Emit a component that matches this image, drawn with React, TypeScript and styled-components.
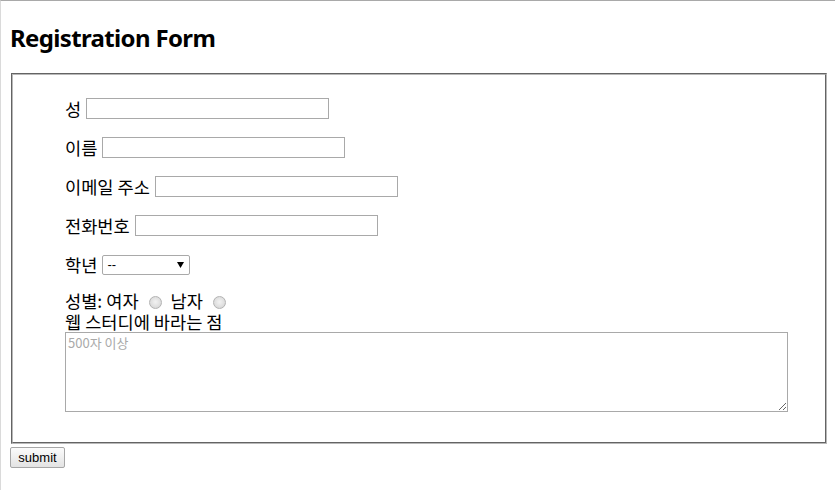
import React from "react";
import styled, { createGlobalStyle } from "styled-components";

const GlobalStyle = createGlobalStyle`
  html, body { margin: 0; padding: 0; height: 100%; background: #fff; }
  body {
    box-sizing: border-box;
    border-top: 1px solid #a9a9a9;
    border-left: 1px solid #dadada;
    font-family: "Noto Sans CJK KR", "Noto Sans", sans-serif;
    color: #000;
  }
  #root { height: 100%; }
`;

const Page = styled.div`
  padding: 0 8px 0 8px;
`;

const Title = styled.h2`
  margin: 0;
  padding: 23px 0 0 1px;
  font-family: "Noto Sans", "Noto Sans CJK KR", sans-serif;
  font-weight: 700;
  font-size: 24px;
  line-height: 28px;
  letter-spacing: -0.65px;
`;

const Form = styled.form`
  margin: 0;
`;

const FieldSet = styled.fieldset`
  margin: 21px 0 3px 2px;
  padding: 23px 0 30px 52px;
  border: 2px groove #b8b8b8;
  min-width: 0;
`;

const Rows = styled.div`
  display: flex;
  flex-direction: column;
  gap: 18px;
`;

const Field = styled.label`
  display: flex;
  align-items: center;
  gap: 5px;
  height: 21px;
  font-size: 17.6px;
  line-height: 21px;
`;

const TextInput = styled.input`
  box-sizing: border-box;
  width: 243px;
  height: 21px;
  margin: 0;
  padding: 1px 3px;
  border: 1px solid #a9a9a9;
  font-family: "Noto Sans CJK KR", sans-serif;
  font-size: 13px;
  outline: none;
`;

const SelectWrap = styled.span`
  position: relative;
  display: inline-flex;
  height: 20px;
`;

const Select = styled.select`
  box-sizing: border-box;
  width: 88px;
  height: 20px;
  margin: 0;
  padding: 0 0 0 4px;
  border: 1px solid #a9a9a9;
  border-radius: 2px;
  background: #fff;
  appearance: none;
  font-family: "Liberation Sans", Arial, sans-serif;
  font-size: 13px;
  color: #000;
`;

const Arrow = styled.svg`
  position: absolute;
  right: 6px;
  top: 7px;
  pointer-events: none;
`;

const GenderLine = styled.div`
  margin-top: 15px;
  font-size: 17.6px;
  line-height: 21px;
  height: 21px;
  white-space: nowrap;
`;

const Radio = styled.input`
  appearance: none;
  box-sizing: border-box;
  display: inline-block;
  vertical-align: -1px;
  width: 13px;
  height: 13px;
  margin: 0 9px 0 10px;
  border: 1px solid #b3b3b3;
  border-radius: 50%;
  background: radial-gradient(circle at 50% 45%, #f2f2f2 0%, #e0e0e0 55%, #cfcfcf 100%);
`;

const AreaLabel = styled.div`
  font-size: 17.6px;
  line-height: 21px;
`;

const TextArea = styled.textarea`
  display: block;
  box-sizing: border-box;
  width: 723px;
  height: 80px;
  margin: 0;
  padding: 2px;
  border: 1px solid #a9a9a9;
  font-family: "Noto Sans CJK KR", sans-serif;
  font-size: 13px;
  line-height: 16px;
  outline: none;
  &::placeholder { color: #a9a9a9; }
`;

const Submit = styled.button`
  display: block;
  box-sizing: border-box;
  width: 55px;
  height: 21px;
  margin: 0 0 0 1px;
  padding: 0;
  border: 1px solid #a6a6a6;
  border-radius: 2px;
  background: linear-gradient(#fbfbfb, #e3e3e3);
  font-family: "Liberation Sans", Arial, sans-serif;
  font-size: 13px;
  color: #000;
`;

export default function App() {
  return (
    <>
      <GlobalStyle />
      <Page>
        <Title>Registration Form</Title>
        <Form onSubmit={(e) => e.preventDefault()}>
          <FieldSet>
            <Rows>
              <Field>
                성 <TextInput type="text" />
              </Field>
              <Field>
                이름 <TextInput type="text" />
              </Field>
              <Field>
                이메일 주소 <TextInput type="email" />
              </Field>
              <Field>
                전화번호 <TextInput type="tel" />
              </Field>
              <Field>
                학년
                <SelectWrap>
                  <Select defaultValue="--">
                    <option>--</option>
                    <option>1학년</option>
                    <option>2학년</option>
                    <option>3학년</option>
                    <option>4학년</option>
                  </Select>
                  <Arrow width="7" height="6" viewBox="0 0 7 6">
                    <path d="M0 0 H7 L3.5 6 Z" fill="#000" />
                  </Arrow>
                </SelectWrap>
              </Field>
            </Rows>
            <GenderLine>
              성별: 여자<Radio type="radio" name="gender" value="f" />남자
              <Radio type="radio" name="gender" value="m" />
            </GenderLine>
            <AreaLabel>웹 스터디에 바라는 점</AreaLabel>
            <TextArea placeholder="500자 이상" />
          </FieldSet>
          <Submit type="submit">submit</Submit>
        </Form>
      </Page>
    </>
  );
}
